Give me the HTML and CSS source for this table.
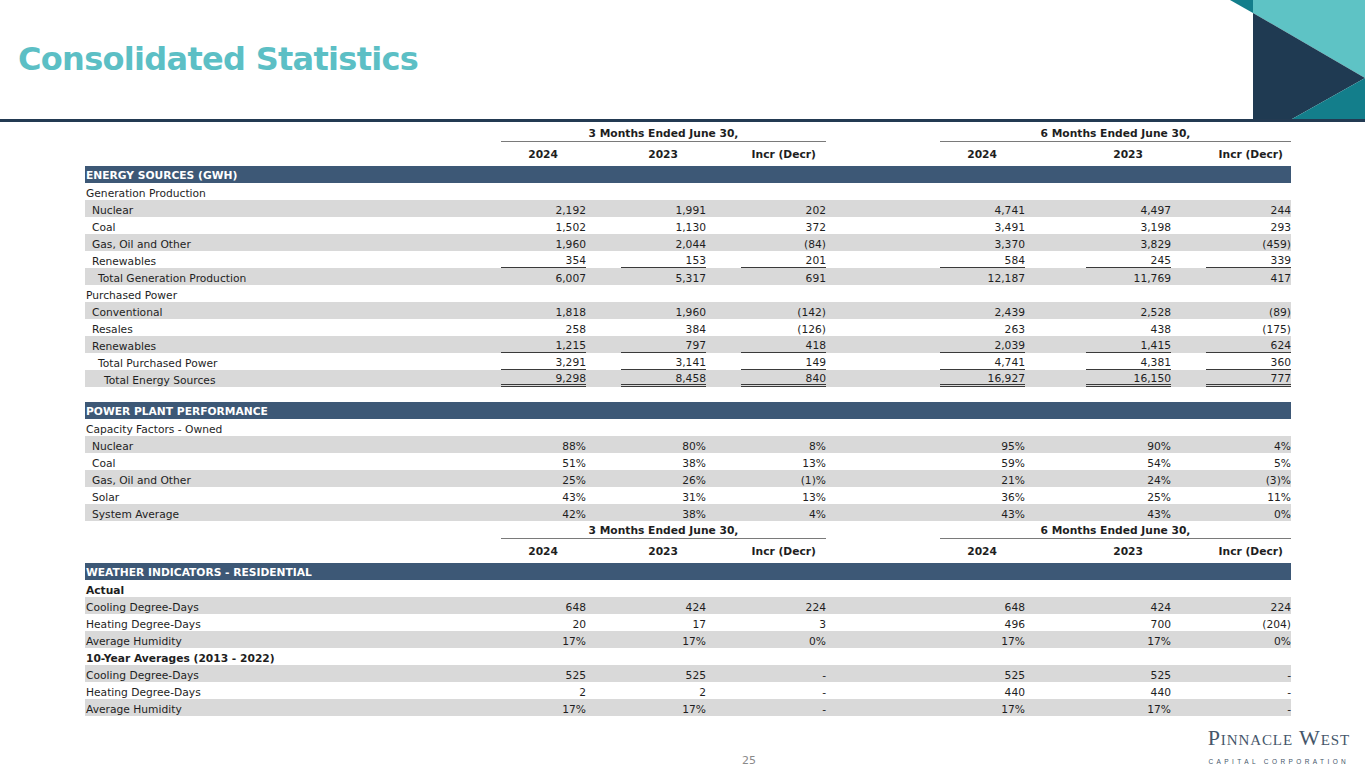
FILE: index.html
```html
<!DOCTYPE html>
<html>
<head>
<meta charset="utf-8">
<link rel="stylesheet" href="styles.css">
</head>
<body>
<div class="slide">
  <header class="top">
    <h1 class="title">Consolidated Statistics</h1>
    <svg class="corner" width="140" height="119" viewBox="0 0 140 119">
      <polygon points="5,0 28,0 28,13" fill="#137e8b"/>
      <polygon points="28,0 140,0 140,78 28,13" fill="#5ec3c5"/>
      <polygon points="28,13 140,78 67,119 28,119" fill="#1f3a52"/>
      <polygon points="140,78 140,119 67,119" fill="#137e8b"/>
    </svg>
  </header>

  <section class="tbl">
    <div class="row grp">
      <div class="g1">3 Months Ended June 30,</div>
      <div class="g2">6 Months Ended June 30,</div>
    </div>
    <div class="row yrs">
      <div></div>
      <div class="h yr">2024</div><div class="h yr">2023</div><div class="h inc1">Incr (Decr)</div>
      <div class="h yr">2024</div><div class="h yr">2023</div><div class="h inc2">Incr (Decr)</div>
    </div>
    <div class="row bar"><div>ENERGY SOURCES (GWH)</div></div>
    <div class="row"><div class="l">Generation Production</div></div>
    <div class="row gray"><div class="l i1">Nuclear</div><div class="n">2,192</div><div class="n">1,991</div><div class="n">202</div><div class="n">4,741</div><div class="n">4,497</div><div class="n">244</div></div>
    <div class="row"><div class="l i1">Coal</div><div class="n">1,502</div><div class="n">1,130</div><div class="n">372</div><div class="n">3,491</div><div class="n">3,198</div><div class="n">293</div></div>
    <div class="row gray"><div class="l i1">Gas, Oil and Other</div><div class="n">1,960</div><div class="n">2,044</div><div class="n">(84)</div><div class="n">3,370</div><div class="n">3,829</div><div class="n">(459)</div></div>
    <div class="row"><div class="l i1">Renewables</div><div class="n u">354</div><div class="n u">153</div><div class="n u">201</div><div class="n u">584</div><div class="n u">245</div><div class="n u">339</div></div>
    <div class="row gray"><div class="l i2">Total Generation Production</div><div class="n">6,007</div><div class="n">5,317</div><div class="n">691</div><div class="n">12,187</div><div class="n">11,769</div><div class="n">417</div></div>
    <div class="row"><div class="l">Purchased Power</div></div>
    <div class="row gray"><div class="l i1">Conventional</div><div class="n">1,818</div><div class="n">1,960</div><div class="n">(142)</div><div class="n">2,439</div><div class="n">2,528</div><div class="n">(89)</div></div>
    <div class="row"><div class="l i1">Resales</div><div class="n">258</div><div class="n">384</div><div class="n">(126)</div><div class="n">263</div><div class="n">438</div><div class="n">(175)</div></div>
    <div class="row gray"><div class="l i1">Renewables</div><div class="n u">1,215</div><div class="n u">797</div><div class="n u">418</div><div class="n u">2,039</div><div class="n u">1,415</div><div class="n u">624</div></div>
    <div class="row"><div class="l i2">Total Purchased Power</div><div class="n u">3,291</div><div class="n u">3,141</div><div class="n u">149</div><div class="n u">4,741</div><div class="n u">4,381</div><div class="n u">360</div></div>
    <div class="row gray"><div class="l i3">Total Energy Sources</div><div class="n uu">9,298</div><div class="n uu">8,458</div><div class="n uu">840</div><div class="n uu">16,927</div><div class="n uu">16,150</div><div class="n uu">777</div></div>
    <div class="spacer"></div>

    <div class="row bar"><div>POWER PLANT PERFORMANCE</div></div>
    <div class="row"><div class="l">Capacity Factors - Owned</div></div>
    <div class="row gray"><div class="l i1">Nuclear</div><div class="n">88%</div><div class="n">80%</div><div class="n">8%</div><div class="n">95%</div><div class="n">90%</div><div class="n">4%</div></div>
    <div class="row"><div class="l i1">Coal</div><div class="n">51%</div><div class="n">38%</div><div class="n">13%</div><div class="n">59%</div><div class="n">54%</div><div class="n">5%</div></div>
    <div class="row gray"><div class="l i1">Gas, Oil and Other</div><div class="n">25%</div><div class="n">26%</div><div class="n">(1)%</div><div class="n">21%</div><div class="n">24%</div><div class="n">(3)%</div></div>
    <div class="row"><div class="l i1">Solar</div><div class="n">43%</div><div class="n">31%</div><div class="n">13%</div><div class="n">36%</div><div class="n">25%</div><div class="n">11%</div></div>
    <div class="row gray"><div class="l i1">System Average</div><div class="n">42%</div><div class="n">38%</div><div class="n">4%</div><div class="n">43%</div><div class="n">43%</div><div class="n">0%</div></div>

    <div class="row grp">
      <div class="g1">3 Months Ended June 30,</div>
      <div class="g2">6 Months Ended June 30,</div>
    </div>
    <div class="row yrs">
      <div></div>
      <div class="h yr">2024</div><div class="h yr">2023</div><div class="h inc1">Incr (Decr)</div>
      <div class="h yr">2024</div><div class="h yr">2023</div><div class="h inc2">Incr (Decr)</div>
    </div>
    <div class="row bar"><div>WEATHER INDICATORS - RESIDENTIAL</div></div>
    <div class="row"><div class="l b">Actual</div></div>
    <div class="row gray"><div class="l">Cooling Degree-Days</div><div class="n">648</div><div class="n">424</div><div class="n">224</div><div class="n">648</div><div class="n">424</div><div class="n">224</div></div>
    <div class="row"><div class="l">Heating Degree-Days</div><div class="n">20</div><div class="n">17</div><div class="n">3</div><div class="n">496</div><div class="n">700</div><div class="n">(204)</div></div>
    <div class="row gray"><div class="l">Average Humidity</div><div class="n">17%</div><div class="n">17%</div><div class="n">0%</div><div class="n">17%</div><div class="n">17%</div><div class="n">0%</div></div>
    <div class="row"><div class="l b">10-Year Averages (2013 - 2022)</div></div>
    <div class="row gray"><div class="l">Cooling Degree-Days</div><div class="n">525</div><div class="n">525</div><div class="n">-</div><div class="n">525</div><div class="n">525</div><div class="n">-</div></div>
    <div class="row"><div class="l">Heating Degree-Days</div><div class="n">2</div><div class="n">2</div><div class="n">-</div><div class="n">440</div><div class="n">440</div><div class="n">-</div></div>
    <div class="row gray"><div class="l">Average Humidity</div><div class="n">17%</div><div class="n">17%</div><div class="n">-</div><div class="n">17%</div><div class="n">17%</div><div class="n">-</div></div>
  </section>

  <footer class="foot">
    <div class="pg">25</div>
    <div class="logo">
      <div class="logo-name">Pinnacle West</div>
      <div class="logo-sub">CAPITAL CORPORATION</div>
    </div>
  </footer>
</div>
</body>
</html>
```

FILE: styles.css
```css
* { box-sizing: border-box; }
html, body { margin: 0; padding: 0; background: #ffffff; }
body {
  font-family: "DejaVu Sans", Verdana, sans-serif;
  font-size: 10.7px;
  color: #1e1e1e;
}
.slide {
  width: 1365px;
  height: 768px;
  overflow: hidden;
  display: flex;
  flex-direction: column;
}
.top {
  display: flex;
  justify-content: space-between;
  align-items: flex-start;
  height: 122px;
  border-bottom: 3px solid #233a52;
}
.title {
  margin: 0;
  padding: 43px 0 0 18px;
  font-family: "DejaVu Sans", Verdana, sans-serif;
  font-weight: bold;
  font-size: 32px;
  line-height: 32px;
  letter-spacing: -0.7px;
  color: #5cbfc5;
}
.corner { display: block; }

.tbl {
  margin: 2px 0 0 85px;
  width: 1206px;
}
.row {
  display: grid;
  grid-template-columns: 416px 85px 120px 120px 199px 146px 120px;
  height: 17px;
  line-height: 17px;
  white-space: nowrap;
}
.row.gray { background: #d9d9d9; }
.l { padding-left: 1px; padding-top: 2px; }
.l.i1 { padding-left: 7px; }
.l.i2 { padding-left: 13px; }
.l.i3 { padding-left: 19px; }
.l.b { font-weight: bold; }
.n {
  justify-self: end;
  width: 85px;
  text-align: right;
  padding-top: 2px;
  height: 17px;
}
.n.u { border-bottom: 1px solid #3a3a3a; line-height: 16px; }
.n.uu { border-bottom: 3px double #3a3a3a; line-height: 15px; padding-top: 1px; }

.grp { height: 17px; line-height: 15px; font-weight: bold; }
.grp .g1 {
  grid-column: 2 / 5;
  text-align: center;
  padding-top: 2px;
  border-bottom: 1px solid #7a7a7a;
}
.grp .g2 {
  grid-column: 5 / 8;
  margin-left: 114px;
  text-align: center;
  padding-top: 2px;
  border-bottom: 1px solid #7a7a7a;
}
.yrs { height: 25px; line-height: 25px; font-weight: bold; }
.yrs .h { text-align: right; padding-top: 1px; }
.yrs .yr { padding-right: 28px; }
.yrs .inc1 { padding-right: 10px; }
.yrs .inc2 { padding-right: 8px; }

.bar {
  background: #3d5876;
  color: #ffffff;
  font-weight: bold;
}
.bar > div { grid-column: 1 / 8; padding-left: 1px; padding-top: 1px; }
.spacer { height: 15px; }

.foot {
  flex: 1;
  display: flex;
  align-items: flex-start;
  padding-left: 742px;
}
.pg {
  margin-top: 38px;
  font-size: 11px;
  color: #8a8a8a;
}
.logo {
  margin-left: auto;
  margin-right: 15px;
  margin-top: 10px;
  color: #45566a;
  text-align: center;
}
.logo-name {
  font-family: "Liberation Serif", "Times New Roman", serif;
  font-variant: small-caps;
  font-size: 22px;
  line-height: 23px;
  letter-spacing: 0.9px;
}
.logo-sub {
  font-family: "Liberation Sans", Arial, sans-serif;
  font-size: 6.5px;
  letter-spacing: 3.4px;
  margin-top: 9px;
  line-height: 8px;
}
```
